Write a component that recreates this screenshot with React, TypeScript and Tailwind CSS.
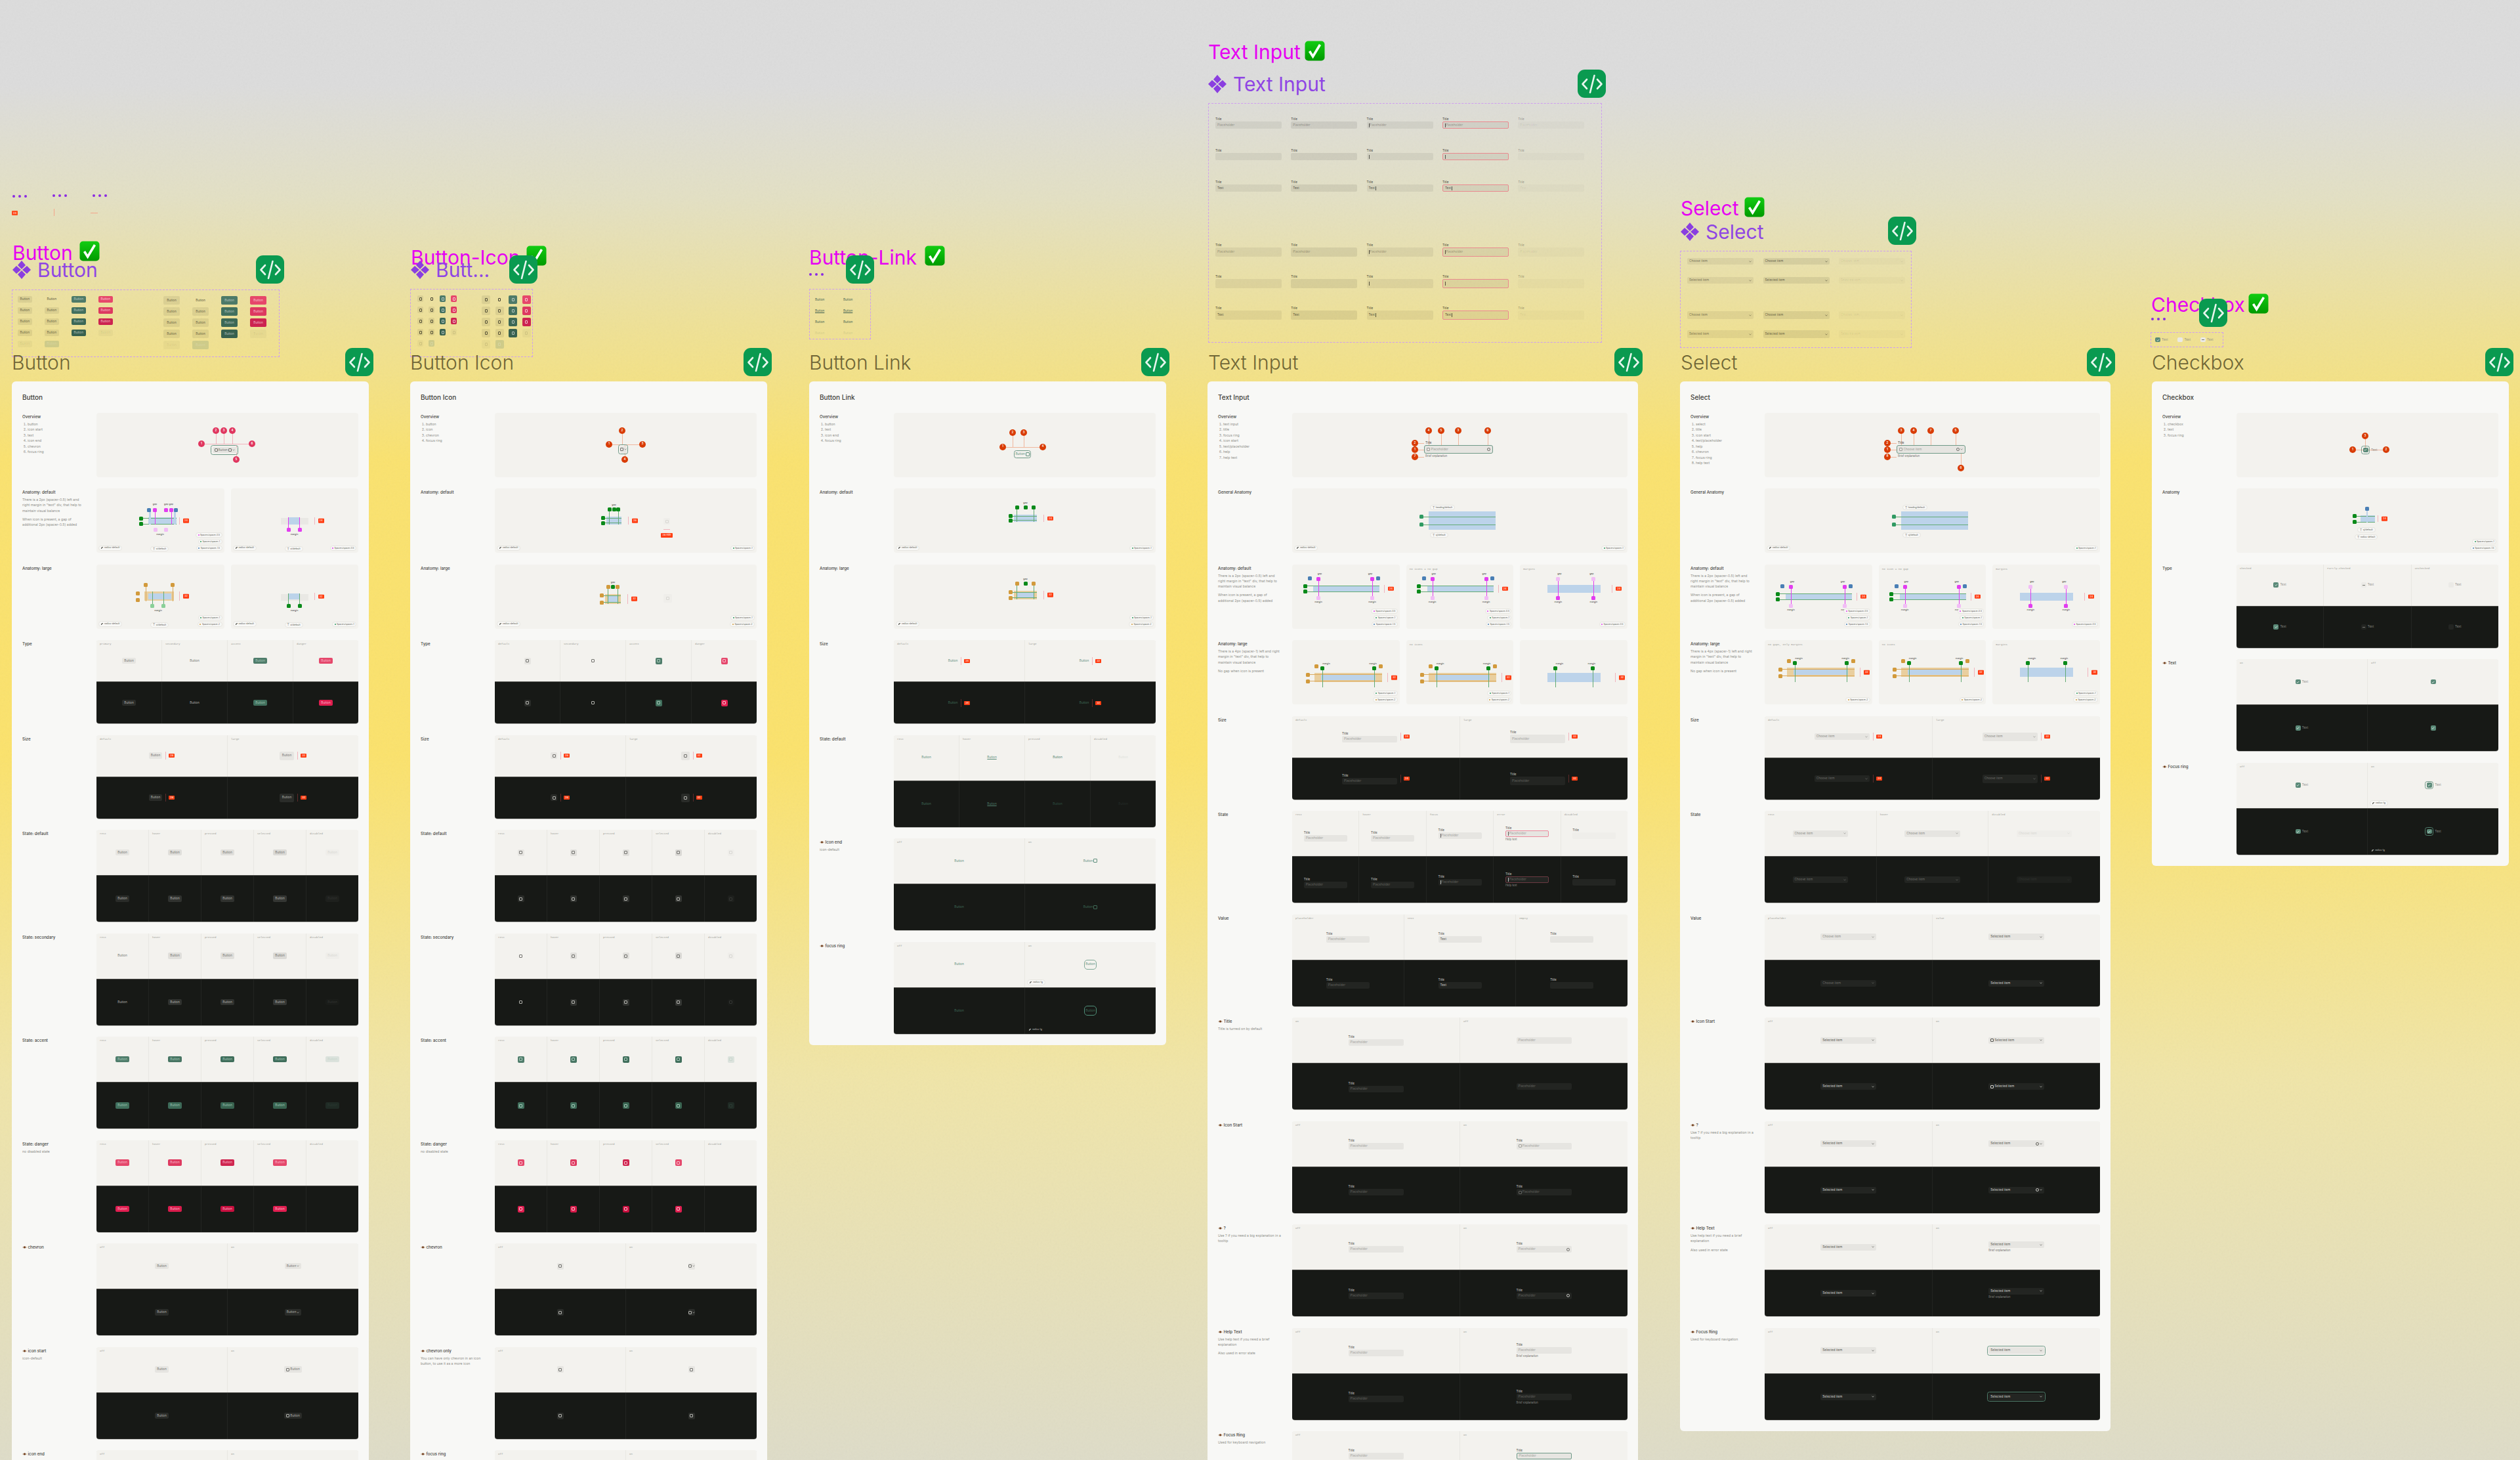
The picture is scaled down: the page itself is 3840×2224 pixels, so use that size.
import type { ReactNode } from 'react';

const SANS = 'font-["Inter","Liberation_Sans",sans-serif]';
const MONO = 'font-["Liberation_Mono",monospace]';

const TONE: Record<string, string> = {
    crimson: 'bg-[#e0365f]',
    rust: 'bg-[#d93c05]',
    blue: 'bg-[#4a7fb5]',
    magenta: 'bg-[#e23df0]',
    lilac: 'bg-[#f2bdf6]',
    green: 'bg-[#0a8a1a]',
    teal: 'bg-[#2f9a62]',
    mint: 'bg-[#8ad098]',
    amber: 'bg-[#d29a3c]',
    pink: 'bg-[#f2b4bd]',
    peach: 'bg-[#f0b79e]',
    greenline: 'bg-[#63ab74]',
    amberline: 'bg-[#dba95c]',
    blueband: 'bg-[#bcd3ea]',
    amberband: 'bg-[#e9cf9f]',
    ghost: 'bg-[#e9e8e4]',
};

/* ---------- canvas furniture ---------- */

function CodeBadge({ x, y }: { x: number; y: number }) {
    return (
        <div className="absolute z-10 flex h-[43px] w-[43px] items-center justify-center rounded-[11px] bg-[#0a9a50]" style={{ left: x, top: y }}>
            <svg width="36" height="36" viewBox="0 0 36 36" fill="none" stroke="#e8f6ee" strokeWidth="2.6" strokeLinecap="round" strokeLinejoin="round">
                <path d="M10 11 3.5 18 10 25" />
                <path d="M26 11 32.5 18 26 25" />
                <path d="M21.5 5 15 31" />
            </svg>
        </div>
    );
}

function CheckEmoji({ x, y }: { x: number; y: number }) {
    return (
        <svg className="absolute" style={{ left: x, top: y }} width="31" height="31" viewBox="0 0 31 31">
            <defs>
                <linearGradient id="emoji" x1="0" y1="0" x2="0" y2="1">
                    <stop offset="0" stopColor="#12cc12" />
                    <stop offset="1" stopColor="#009a00" />
                </linearGradient>
            </defs>
            <rect x="0.5" y="0.5" width="30" height="30" rx="5" fill="url(#emoji)" />
            <path d="M7.5 16 12.6 24 23.5 6" fill="none" stroke="#fff" strokeWidth="3.6" strokeLinejoin="miter" />
        </svg>
    );
}

function Diamonds() {
    return (
        <svg width="28" height="28" viewBox="0 0 28 28" fill="#8a3ee0" className="shrink-0">
            <path d="M14 0 20 7 14 13 8 7Z" />
            <path d="M14 15 20 21 14 28 8 21Z" />
            <path d="M0 14 6 8 13 14 6 20Z" />
            <path d="M15 14 22 8 28 14 22 20Z" />
        </svg>
    );
}

function Magenta({ x, y, children }: { x: number; y: number; children: ReactNode }) {
    return (
        <div className="absolute whitespace-nowrap text-[30px] leading-[34px] text-[#e600f2]" style={{ left: x, top: y }}>
            {children}
        </div>
    );
}

function Purple({ x, y, text }: { x: number; y: number; text: string }) {
    return (
        <div className="absolute flex items-center gap-[10px] whitespace-nowrap text-[30px] leading-[34px] text-[#8f45e4]" style={{ left: x, top: y }}>
            <Diamonds />
            {text}
        </div>
    );
}

function Dots({ x, y }: { x: number; y: number }) {
    return (
        <div className="absolute flex gap-[5px]" style={{ left: x, top: y }}>
            <span className="h-[4px] w-[4px] rounded-full bg-[#8a2be2]" />
            <span className="h-[4px] w-[4px] rounded-full bg-[#8a2be2]" />
            <span className="h-[4px] w-[4px] rounded-full bg-[#8a2be2]" />
        </div>
    );
}

function FrameName({ x, text }: { x: number; text: string }) {
    return (
        <div className="absolute top-[535px] whitespace-nowrap text-[30px] font-light leading-[34px] text-[#6f6636]" style={{ left: x }}>
            {text}
        </div>
    );
}

function Dashed({ x, y, w, h, children }: { x: number; y: number; w: number; h: number; children: ReactNode }) {
    return (
        <div className="absolute border border-dashed border-[#cf9df0]" style={{ left: x, top: y, width: w, height: h }}>
            {children}
        </div>
    );
}

/* ---------- preview sets inside the dashed frames ---------- */

const GLASS = [
    ['bg-black/[0.07] text-black/60', 'bg-transparent text-black/70', 'bg-[#4d7a68] text-white/60', 'bg-[#e6476a] text-white/70'],
    ['bg-black/[0.07] text-black/60', 'bg-black/[0.07] text-black/60', 'bg-[#42705e] text-white/60', 'bg-[#dd3960] text-white/70'],
    ['bg-black/[0.07] text-black/60', 'bg-black/[0.07] text-black/60', 'bg-[#3c6856] text-white/60', 'bg-[#cc2450] text-white/70'],
    ['bg-black/[0.07] text-black/60', 'bg-black/[0.07] text-black/60', 'bg-[#38614f] text-white/60'],
    ['bg-black/[0.03] text-black/10', 'bg-black/[0.03] text-black/10', 'bg-[#4d7a68]/20 text-white/20'],
];

function ButtonSet({ large }: { large?: boolean }) {
    return (
        <div className={large ? 'grid grid-cols-[repeat(4,25px)] gap-x-[19px] gap-y-[4px]' : 'grid grid-cols-[repeat(4,21.5px)] gap-x-[19.5px] gap-y-[7.5px]'}>
            {GLASS.flat().map((tone, i) => (
                <span key={i} className={`flex items-center justify-center rounded-[2px] text-[4.7px] ${large ? 'h-[13px]' : 'h-[9.5px]'} ${tone}`}>
                    Button
                </span>
            ))}
        </div>
    );
}

function IconSet({ large }: { large?: boolean }) {
    return (
        <div className={large ? 'grid grid-cols-[repeat(4,13px)] gap-x-[7.5px] gap-y-[4px]' : 'grid grid-cols-[repeat(4,9px)] gap-x-[8px] gap-y-[7px]'}>
            {GLASS.flat().map((tone, i) => (
                <span key={i} className={`flex items-center justify-center rounded-[2px] ${large ? 'h-[13px]' : 'h-[10px]'} ${tone}`}>
                    <span className="h-[5px] w-[4px] rounded-[1px] border-[0.5px] border-current" />
                </span>
            ))}
        </div>
    );
}

function LinkSet() {
    const rows = ['text-[#3f5f50]', 'text-[#3f5f50] underline', 'text-[#3f5f50]', 'text-[#3f5f50]/20'];
    return (
        <div className="grid grid-cols-[repeat(2,16px)] gap-x-[27px] gap-y-[10px] pl-[8px] pt-[12px]">
            {rows.flatMap((tone, i) => [
                <span key={`a${i}`} className={`text-[4.7px] leading-[7px] ${tone}`}>Button</span>,
                <span key={`b${i}`} className={`text-[4.7px] leading-[7px] ${tone}`}>Button</span>,
            ])}
        </div>
    );
}

function InputSet({ large }: { large?: boolean }) {
    const stateTone = [
        'bg-black/[0.06]',
        'bg-black/[0.08]',
        'bg-black/[0.06]',
        'bg-black/[0.06] border border-[#e98a8f]',
        'bg-black/[0.02]',
    ];
    const rows = [
        { text: 'Placeholder', tone: 'text-black/35' },
        { text: '', tone: '' },
        { text: 'Text', tone: 'text-black/70' },
    ];
    return (
        <div className="grid grid-cols-[repeat(5,101px)] gap-x-[14.3px]">
            {rows.flatMap((row, r) =>
                stateTone.map((tone, i) => (
                    <div key={`${r}-${i}`} className="h-[48px]">
                        <div className={`text-[4.7px] leading-[7px] ${i === 4 ? 'text-black/40' : 'text-black/80'}`}>Title</div>
                        <div className={`flex items-center rounded-[2px] px-[3px] text-[4.7px] ${large ? 'h-[14px]' : 'h-[11px]'} ${tone} ${i === 4 ? 'text-black/10' : row.tone}`}>
                            {i > 1 && i < 4 && r !== 2 ? <span className="mr-[0.5px] h-[6px] w-[0.5px] bg-black/60" /> : null}
                            {row.text}
                            {i > 1 && i < 4 && r === 2 ? <span className="ml-[0.5px] h-[6px] w-[0.5px] bg-black/60" /> : null}
                        </div>
                    </div>
                )),
            )}
        </div>
    );
}

function SelectSet({ large }: { large?: boolean }) {
    const labels = ['Choose item', 'Selected item'];
    return (
        <div className={`grid grid-cols-[repeat(3,101px)] gap-x-[14.5px] ${large ? 'gap-y-[17px]' : 'gap-y-[19px]'}`}>
            {labels.flatMap(label =>
                [0, 1, 2].map(i => (
                    <div key={label + i} className={`flex items-center justify-between rounded-[2px] px-[3px] text-[4.7px] ${large ? 'h-[12px]' : 'h-[10px]'} ${i === 2 ? 'bg-black/[0.02] text-black/10' : i === 1 ? 'bg-black/[0.08] text-black/60' : 'bg-black/[0.06] text-black/50'}`}>
                        {label}
                        <svg width="4" height="3" viewBox="0 0 4 3" fill="none" stroke="currentColor" strokeWidth="0.6">
                            <path d="M0.5 0.5 2 2.2 3.5 0.5" />
                        </svg>
                    </div>
                )),
            )}
        </div>
    );
}

/* ---------- widgets used in the spec tables ---------- */

type Tone = { light: string; dark: string };

const BTN: Record<string, Tone> = {
    primary: { light: 'bg-[#e6e5e1] text-[#72726e]', dark: 'bg-[#2a2c29] text-[#b3b3ae]' },
    hover: { light: 'bg-[#e0dfdb] text-[#72726e]', dark: 'bg-[#30322f] text-[#b3b3ae]' },
    pressed: { light: 'bg-[#dbdad6] text-[#72726e]', dark: 'bg-[#343633] text-[#b3b3ae]' },
    disabled: { light: 'bg-[#efeeea] text-[#d8d7d3]', dark: 'bg-[#1e201d] text-[#343633]' },
    secondary: { light: 'bg-transparent text-[#72726e]', dark: 'bg-transparent text-[#b3b3ae]' },
    secDisabled: { light: 'bg-[#efeeea] text-[#d8d7d3]', dark: 'bg-[#1a1c19] text-[#343633]' },
    accent: { light: 'bg-[#4f7d6b] text-[#a9cbbb]', dark: 'bg-[#41705d] text-[#9fc4b3]' },
    accentHover: { light: 'bg-[#477563] text-[#a9cbbb]', dark: 'bg-[#3d6a58] text-[#9fc4b3]' },
    accentPress: { light: 'bg-[#3f6e5b] text-[#a9cbbb]', dark: 'bg-[#386350] text-[#9fc4b3]' },
    accentOff: { light: 'bg-[#dbe2dc] text-[#c8d6cd]', dark: 'bg-[#202b25] text-[#2c3a33]' },
    danger: { light: 'bg-[#e5486c] text-[#f9bccb]', dark: 'bg-[#e01e50] text-[#f9bccb]' },
    dangerHover: { light: 'bg-[#de3a60] text-[#f9bccb]', dark: 'bg-[#d81b4b] text-[#f9bccb]' },
    dangerPress: { light: 'bg-[#cf2650] text-[#f9bccb]', dark: 'bg-[#c80f3f] text-[#f9bccb]' },
    empty: { light: 'hidden', dark: 'hidden' },
};

function Glyph() {
    return <span className="h-[5px] w-[5px] shrink-0 rounded-[1px] border-[0.5px] border-current" />;
}

function Chevron() {
    return (
        <svg width="4" height="3" viewBox="0 0 4 3" fill="none" stroke="currentColor" strokeWidth="0.6" className="shrink-0">
            <path d="M0.5 0.5 2 2.2 3.5 0.5" />
        </svg>
    );
}

function Btn({ tone = 'primary', dark, large, start, end, chevron }: { tone?: string; dark?: boolean; large?: boolean; start?: boolean; end?: boolean; chevron?: boolean }) {
    const t = BTN[tone];
    return (
        <span className={`flex items-center justify-center gap-[1px] rounded-[2px] text-[4.7px] ${large ? 'h-[13px] px-[4px]' : 'h-[9.5px] px-[3px]'} ${dark ? t.dark : t.light}`}>
            {start && <Glyph />}
            Button
            {end && <Glyph />}
            {chevron && <Chevron />}
        </span>
    );
}

function IconBtn({ tone = 'primary', dark, large, chevron }: { tone?: string; dark?: boolean; large?: boolean; chevron?: boolean }) {
    const t = BTN[tone];
    return (
        <span className={`flex items-center justify-center gap-[1px] rounded-[2px] ${large ? 'h-[13px] min-w-[13px]' : 'h-[10px] min-w-[10px]'} ${dark ? t.dark : t.light}`}>
            <Glyph />
            {chevron && <Chevron />}
        </span>
    );
}

function Measure({ n, dark }: { n: number; dark?: boolean }) {
    return (
        <span className="ml-[5px] flex items-center gap-[4px]">
            <span className={`h-[12px] w-[1px] ${dark ? 'bg-[#5c2a2a]' : 'bg-[#f2b4bd]'}`} />
            <span className="flex h-[6px] w-[9px] items-center justify-center rounded-[1px] bg-[#ff3d12] text-[4px] text-white">{n}</span>
        </span>
    );
}

function Ring({ children, dark }: { children: ReactNode; dark?: boolean }) {
    return <span className={`inline-flex rounded-[3.5px] border-[0.8px] p-[1.5px] ${dark ? 'border-[#4f7d6b]' : 'border-[#6f9a88]'}`}>{children}</span>;
}

function RadiusPill({ text, dark }: { text: string; dark?: boolean }) {
    return (
        <span className={`absolute bottom-[3px] left-[3px] flex items-center gap-[2px] rounded-full px-[3px] py-[0.5px] text-[3.5px] ${dark ? 'text-[#c6c6c1]' : 'border-[0.5px] border-[#e6e5e0] bg-[#f8f8f6] text-[#55554f]'}`}>
            <span className="h-[3px] w-[3px] rounded-tl-[3px] border-l-[0.5px] border-t-[0.5px] border-current" />
            {text}
        </span>
    );
}

function Field({ w = 'w-[84px]', dark, large, title = true, value, ph = 'Placeholder', start, help, helpText, tone, caret, shift }: { w?: string; dark?: boolean; large?: boolean; title?: boolean; value?: string; ph?: string; start?: boolean; help?: boolean; helpText?: string; tone?: string; caret?: boolean; shift?: boolean }) {
    const fill = dark ? 'bg-[#232522]' : 'bg-[#e6e5e1]';
    const ink = value ? (dark ? 'text-[#d4d4cf]' : 'text-[#4c4c48]') : dark ? 'text-[#62625e]' : 'text-[#a3a39e]';
    return (
        <div className={`flex flex-col gap-[1px] ${w} ${shift ? 'mt-[8px]' : ''}`}>
            {title && <span className={`text-[4.7px] leading-[6px] ${dark ? 'text-[#cfcfca]' : 'text-[#454541]'}`}>Title</span>}
            <div className={`flex items-center gap-[1px] rounded-[2px] px-[3px] text-[4.7px] ${large ? 'h-[12.5px]' : 'h-[10px]'} ${fill} ${ink} ${tone ?? ''}`}>
                {start && <Glyph />}
                {caret && <span className={`h-[6px] w-[0.5px] ${dark ? 'bg-white/70' : 'bg-black/60'}`} />}
                {value ?? ph}
                {help && <span className={`ml-auto h-[5px] w-[5px] rounded-full border-[0.6px] ${dark ? 'border-[#cfcfca] text-[#cfcfca]' : 'border-[#6a6a66]'}`} />}
            </div>
            {helpText && <span className={`text-[4.2px] leading-[6px] ${dark ? 'text-[#8d8d88]' : 'text-[#6a6a66]'}`}>{helpText}</span>}
        </div>
    );
}

function Sel({ dark, large, text = 'Choose item', faint, start, help, helpText, w = 'w-[84.5px]' }: { dark?: boolean; large?: boolean; text?: string; faint?: boolean; start?: boolean; help?: boolean; helpText?: string; w?: string }) {
    const isValue = text.startsWith('Selected');
    const tone = faint
        ? dark ? 'bg-[#1e201d] text-[#323431]' : 'bg-[#efeeea] text-[#d8d7d3]'
        : dark
            ? `bg-[#232522] ${isValue ? 'text-[#d4d4cf]' : 'text-[#6c6c68]'}`
            : `bg-[#e6e5e1] ${isValue ? 'text-[#55554f]' : 'text-[#8c8c87]'}`;
    return (
        <div className={`flex flex-col gap-[1px] ${w}`}>
            <div className={`flex items-center gap-[1px] rounded-[2px] px-[3px] text-[4.7px] ${large ? 'h-[13px]' : 'h-[10px]'} ${tone}`}>
                {start && <Glyph />}
                {text}
                <span className="ml-auto flex items-center gap-[1px]">
                    {help && <span className="h-[5px] w-[5px] rounded-full border-[0.6px] border-current" />}
                    <Chevron />
                </span>
            </div>
            {helpText && <span className={`text-[4.2px] leading-[6px] ${dark ? 'text-[#8d8d88]' : 'text-[#6a6a66]'}`}>{helpText}</span>}
        </div>
    );
}

function CheckRow({ kind = 'on', dark, text = true, ring }: { kind?: 'on' | 'part' | 'off'; dark?: boolean; text?: boolean; ring?: boolean }) {
    const box = (
        <span className={`flex h-[7.5px] w-[8px] items-center justify-center rounded-[2px] ${kind === 'on' ? 'bg-[#5a8a78]' : dark ? 'bg-[#232522]' : 'bg-[#ebeae6]'}`}>
            {kind === 'on' && (
                <svg width="5" height="4" viewBox="0 0 5 4" fill="none" stroke="#fff" strokeWidth="0.7">
                    <path d="M0.6 2 2 3.3 4.4 0.7" />
                </svg>
            )}
            {kind === 'part' && <span className="h-[0.7px] w-[4px] bg-[#77776f]" />}
        </span>
    );
    return (
        <span className={`flex items-center gap-[2px] text-[4.7px] ${dark ? 'text-[#8d8d88]' : 'text-[#8c8c87]'}`}>
            {ring ? <Ring dark={dark}>{box}</Ring> : box}
            {text && 'Text'}
        </span>
    );
}

/* ---------- spec sheet layout ---------- */

type Cell = (dark: boolean) => ReactNode;

function Eye() {
    return (
        <svg width="7" height="4" viewBox="0 0 7 4" className="mr-[1.5px] inline-block align-baseline">
            <path d="M0 2C1.5 0 5.5 0 7 2 5.5 4 1.5 4 0 2Z" fill="#c9b8a4" />
            <circle cx="3.5" cy="2" r="1.4" fill="#6b3413" />
        </svg>
    );
}

function Row({ h, title, eye, list, note, children }: { h: string; title: string; eye?: boolean; list?: string[]; note?: string[]; children: ReactNode }) {
    return (
        <div className={`flex ${h}`}>
            <div className="w-[113px] shrink-0 pr-[16px] pt-[2px]">
                <div className="text-[6.2px] font-medium leading-[8px] text-[#3f3f3b]">
                    {eye && <Eye />}
                    {title}
                </div>
                {list && (
                    <ol className="mt-[2.5px] list-decimal pl-[8px] text-[5.2px] leading-[8.5px] text-[#8f8f8a]">
                        {list.map(item => (
                            <li key={item}>{item}</li>
                        ))}
                    </ol>
                )}
                {note?.map(line => (
                    <p key={line} className="mt-[3px] mb-[5px] text-[5.2px] leading-[8.3px] text-[#8f8f8a]">
                        {line}
                    </p>
                ))}
            </div>
            <div className="flex min-w-0 flex-1 gap-[10px]">{children}</div>
        </div>
    );
}

function Panel({ label, children }: { label?: string; children?: ReactNode }) {
    return (
        <div className={`relative min-w-0 flex-1 overflow-hidden rounded-[4px] bg-[#f3f2ee] ${SANS}`}>
            {label && <span className={`absolute left-[5px] top-[4px] text-[4.2px] text-[#9c9c97] ${MONO}`}>{label}</span>}
            {children}
        </div>
    );
}

function Table({ labels, cells, tall = true }: { labels: string[]; cells: Cell[]; tall?: boolean }) {
    return (
        <div className="flex min-w-0 flex-1 flex-col overflow-hidden rounded-[4px] shadow-[0_0.5px_0_#8a8a86]">
            <div className={`flex border-b border-[#4a4a46] ${tall ? 'h-[70px]' : 'h-[64px]'}`}>
                {cells.map((cell, i) => (
                    <div key={i} className="relative flex min-w-0 flex-1 items-center justify-center border-r border-[#e8e7e2] bg-[#f3f2ee] last:border-r-0">
                        <span className={`absolute left-[5px] top-[3px] text-[4.2px] text-[#9c9c97] ${MONO}`}>{labels[i]}</span>
                        {cell(false)}
                    </div>
                ))}
            </div>
            <div className="flex flex-1">
                {cells.map((cell, i) => (
                    <div key={i} className="relative flex min-w-0 flex-1 items-center justify-center border-r border-[#232522] bg-[#171916] last:border-r-0">
                        {cell(true)}
                    </div>
                ))}
            </div>
        </div>
    );
}

function Card({ title, width, children }: { title: string; width: string; children: ReactNode }) {
    return (
        <div className={`rounded-[6px] bg-[#f8f8f6] px-[16px] pb-[17px] ${width} ${SANS}`}>
            <div className="h-[48px] pt-[17px] text-[10px] font-medium leading-[14px] text-[#3f3f3b]">{title}</div>
            <div className="flex flex-col gap-[17.5px]">{children}</div>
        </div>
    );
}

/* ---------- diagram pieces: these sit on a free canvas inside a panel ---------- */

function Pin({ x, y, n, c = 'crimson' }: { x: number; y: number; n: number; c?: string }) {
    return (
        <span className={`absolute flex h-[10px] w-[10px] -translate-x-1/2 -translate-y-1/2 items-center justify-center rounded-full text-[4.5px] font-semibold text-white ${TONE[c]}`} style={{ left: x, top: y }}>
            {n}
        </span>
    );
}

function Bar({ x, y, w, h, c }: { x: number; y: number; w: number; h: number; c: string }) {
    return <span className={`absolute ${TONE[c]}`} style={{ left: x, top: y, width: w, height: h }} />;
}

function Chip({ x, y, n, c }: { x: number; y: number; n: string; c: string }) {
    return (
        <span className={`absolute flex h-[6px] w-[6px] -translate-x-1/2 -translate-y-1/2 items-center justify-center rounded-[1.5px] text-[3.5px] text-white ${TONE[c]}`} style={{ left: x, top: y }}>
            {n}
        </span>
    );
}

function Note({ x, y, text }: { x: number; y: number; text: string }) {
    return (
        <span className="absolute -translate-x-1/2 -translate-y-1/2 whitespace-nowrap text-[3.6px] text-[#3f3f3b]" style={{ left: x, top: y }}>
            {text}
        </span>
    );
}

function Size({ x, y, h, n }: { x: number; y: number; h: number; n: number }) {
    return (
        <>
            <Bar x={x} y={y - h / 2} w={1} h={h} c="pink" />
            <span className="absolute flex h-[6.5px] w-[9px] -translate-y-1/2 items-center justify-center rounded-[1px] bg-[#ff3d12] text-[4px] text-white" style={{ left: x + 6, top: y }}>
                {n}
            </span>
        </>
    );
}

function Tokens({ items }: { items: [string, string][] }) {
    return (
        <div className="absolute bottom-[3px] right-[3px] flex flex-col items-end gap-[2px]">
            {items.map(([text, c]) => (
                <span key={text} className="flex items-center gap-[1.5px] rounded-full border-[0.5px] border-[#e6e5e0] bg-[#f8f8f6] px-[2.5px] text-[3.2px] leading-[6px] text-[#55554f]">
                    <span className={`h-[2px] w-[2px] rounded-full ${TONE[c]}`} />
                    {text}
                </span>
            ))}
        </div>
    );
}

function StylePill({ x, y, text }: { x: number; y: number; text: string }) {
    return (
        <span className="absolute flex items-center gap-[1.5px] rounded-full border-[0.5px] border-[#e6e5e0] bg-[#f8f8f6] px-[3px] text-[3.4px] leading-[6px] text-[#55554f]" style={{ left: x, top: y }}>
            <b className="text-[5px] font-normal leading-[5px] text-[#8c8c87]">T</b>
            {text}
        </span>
    );
}

const SP05: [string, string] = ['Spacers/spacer-0.5', 'magenta'];
const SP1: [string, string] = ['Spacers/spacer-1', 'teal'];
const SP15: [string, string] = ['Spacers/spacer-1.5', 'blue'];
const SP2: [string, string] = ['Spacers/spacer-2', 'amber'];

function ButtonOverview() {
    return (
        <Panel>
            <Bar x={165} y={47} w={72} h={0.7} c="pink" />
            <Bar x={182} y={27} w={0.7} h={20} c="pink" />
            <Bar x={194} y={27} w={0.7} h={20} c="pink" />
            <Bar x={207} y={27} w={0.7} h={20} c="pink" />
            <Bar x={213} y={50} w={0.7} h={21} c="pink" />
            <div className="absolute left-[174px] top-[41px]">
                <Ring><Btn start end chevron /></Ring>
            </div>
            <Pin x={160} y={47} n={1} />
            <Pin x={237} y={47} n={6} />
            <Pin x={182} y={27} n={2} />
            <Pin x={194} y={27} n={3} />
            <Pin x={207} y={27} n={4} />
            <Pin x={213} y={71} n={5} />
        </Panel>
    );
}

function ButtonAnatomy({ large, text }: { large?: boolean; text?: boolean }) {
    if (text) {
        return (
            <Panel>
                <Bar x={76} y={45} w={42} h={10} c="ghost" />
                <Bar x={87} y={44} w={18} h={large ? 9 : 11} c="blueband" />
                <Bar x={87} y={44} w={1} h={19} c={large ? 'greenline' : 'magenta'} />
                <Bar x={104} y={44} w={1} h={19} c={large ? 'greenline' : 'magenta'} />
                <Chip x={88} y={63} n="" c={large ? 'green' : 'magenta'} />
                <Chip x={105} y={63} n="" c={large ? 'green' : 'magenta'} />
                <Note x={97} y={71} text="margin" />
                <Size x={127} y={49} h={11} n={large ? 32 : 24} />
                <RadiusPill text="radius-default" />
                <StylePill x={82} y={88} text="st/default" />
                <Tokens items={[large ? SP1 : SP05]} />
            </Panel>
        );
    }
    if (large) {
        return (
            <Panel>
                <Bar x={73} y={41.5} w={45} h={14} c="amberband" />
                <Bar x={79} y={44} w={35} h={9} c="blueband" />
                <Bar x={75} y={31} w={0.7} h={25} c="amberline" />
                <Bar x={116} y={31} w={0.7} h={25} c="amberline" />
                <Bar x={85} y={41} w={0.7} h={22} c="greenline" />
                <Bar x={102} y={41} w={0.7} h={22} c="greenline" />
                <Chip x={75} y={31} n="" c="amber" />
                <Chip x={116} y={31} n="" c="amber" />
                <Chip x={63} y={44} n="" c="amber" />
                <Chip x={63} y={54} n="" c="amber" />
                <Chip x={85} y={63} n="" c="mint" />
                <Chip x={102} y={63} n="" c="mint" />
                <Note x={94} y={71} text="margin" />
                <Size x={126} y={48.6} h={14} n={32} />
                <RadiusPill text="radius-default" />
                <StylePill x={82} y={88} text="st/default" />
                <Tokens items={[SP1, SP2]} />
            </Panel>
        );
    }
    return (
        <Panel>
            <Bar x={79} y={44} w={43} h={11} c="blueband" />
            <Bar x={68} y={45} w={54} h={1} c="greenline" />
            <Bar x={68} y={54} w={54} h={1} c="greenline" />
            <Bar x={80} y={33} w={3} h={22} c="blueband" />
            <Bar x={118} y={33} w={3} h={22} c="blueband" />
            <Bar x={89} y={33} w={1} h={22} c="magenta" />
            <Bar x={114} y={33} w={1} h={22} c="magenta" />
            <Chip x={68} y={45.5} n="" c="green" />
            <Chip x={68} y={54} n="" c="green" />
            <Chip x={80} y={33} n="" c="blue" />
            <Chip x={121} y={33} n="" c="blue" />
            <Chip x={89} y={33} n="" c="magenta" />
            <Chip x={106} y={33} n="" c="magenta" />
            <Chip x={114} y={33} n="" c="magenta" />
            <Chip x={89.5} y={63} n="" c="lilac" />
            <Chip x={105.5} y={63} n="" c="lilac" />
            <Note x={89} y={24.5} text="gap" />
            <Note x={110} y={24.5} text="gap gap" />
            <Note x={97} y={71} text="margin" />
            <Size x={126} y={49} h={11} n={24} />
            <RadiusPill text="radius-default" />
            <StylePill x={82} y={88} text="st/default" />
            <Tokens items={[SP05, SP1, SP15]} />
        </Panel>
    );
}

function CrossOverview({ x, y, w, h, pins, children, c = 'rust' }: { x: number; y: number; w: number; h: number; pins: [number, number][]; children: ReactNode; c?: string }) {
    const cx = x + w / 2;
    const cy = y + h / 2;
    return (
        <Panel>
            {pins.map(([px, py], i) =>
                py === cy ? (
                    <Bar key={i} x={Math.min(px, cx)} y={py} w={Math.abs(px - cx)} h={0.7} c="peach" />
                ) : (
                    <Bar key={i} x={px} y={Math.min(py, cy)} w={0.7} h={Math.abs(py - cy)} c="peach" />
                ),
            )}
            <div className="absolute" style={{ left: x, top: y }}>{children}</div>
            {pins.map(([px, py], i) => (
                <Pin key={i} x={px} y={py} n={i + 1} c={c} />
            ))}
        </Panel>
    );
}

function GridAnatomy({ x, y, w, h, large, n, children, pillX }: { x: number; y: number; w: number; h: number; large?: boolean; n: number; children?: ReactNode; pillX?: boolean }) {
    return (
        <Panel>
            <Bar x={x} y={y} w={w} h={h} c={large ? 'amberband' : 'blueband'} />
            <Bar x={x + 4} y={y + 3} w={w - 8} h={h - 6} c="blueband" />
            <Bar x={x - 5} y={y + 2} w={w + 5} h={1} c="greenline" />
            <Bar x={x - 5} y={y + h - 3} w={w + 5} h={1} c="greenline" />
            <Bar x={x + 4} y={y - 11} w={1} h={h + 11} c="greenline" />
            <Bar x={x + w - 5} y={y - 11} w={1} h={h + 11} c="greenline" />
            <Chip x={x - 5} y={y + 2} n="" c={large ? 'amber' : 'green'} />
            <Chip x={x - 5} y={y + h - 2} n="" c={large ? 'amber' : 'green'} />
            <Chip x={x + 5} y={y - 11} n="" c={large ? 'amber' : 'green'} />
            <Chip x={x + w / 2} y={y - 11} n="" c="green" />
            <Chip x={x + w - 5} y={y - 11} n="" c={large ? 'amber' : 'green'} />
            <Note x={x + w / 2} y={y - 17} text="gap" />
            <Size x={x + w + 10} y={y + h / 2} h={h} n={n} />
            {children}
            <RadiusPill text="radius-default" />
            <Tokens items={pillX ? [SP1, SP2] : [SP1]} />
        </Panel>
    );
}

function FieldOverview({ select }: { select?: boolean }) {
    const tops = select ? [208, 227, 253, 291] : [208, 227, 253, 298];
    return (
        <Panel>
            <Bar x={187} y={46} w={14} h={0.7} c="peach" />
            <Bar x={187} y={56} w={14} h={0.7} c="peach" />
            <Bar x={187} y={66.5} w={14} h={0.7} c="peach" />
            {tops.map(x => (
                <Bar key={x} x={x} y={27} w={0.7} h={24} c="peach" />
            ))}
            {select && <Bar x={299} y={56} w={0.7} h={28} c="peach" />}
            <span className="absolute left-[203px] top-[42px] text-[4.7px] leading-[6px] text-[#454541]">Title</span>
            <div className={`absolute left-[201px] top-[49px] flex h-[13px] w-[105px] items-center gap-[1.5px] rounded-[3px] border-[0.8px] border-[#6f9a88] bg-[#e6e5e1] px-[3px] text-[4.7px] text-[#9c9c97]`}>
                <Glyph />
                {select ? 'Choose item' : 'Placeholder'}
                <span className="ml-auto flex items-center gap-[1.5px] text-[#6a6a66]">
                    <span className="h-[5px] w-[5px] rounded-full border-[0.6px] border-current" />
                    {select && <Chevron />}
                </span>
            </div>
            <span className="absolute left-[203px] top-[63px] text-[4.2px] leading-[6px] text-[#6a6a66]">Brief explanation</span>
            <Pin x={187} y={46} n={2} c="rust" />
            <Pin x={187} y={56} n={1} c="rust" />
            <Pin x={187} y={66.5} n={select ? 8 : 7} c="rust" />
            <Pin x={208} y={27} n={select ? 3 : 4} c="rust" />
            <Pin x={227} y={27} n={select ? 4 : 5} c="rust" />
            <Pin x={253} y={27} n={select ? 7 : 3} c="rust" />
            <Pin x={select ? 291 : 298} y={27} n={select ? 5 : 6} c="rust" />
            {select && <Pin x={299} y={84} n={6} c="rust" />}
        </Panel>
    );
}

function GeneralAnatomy() {
    return (
        <Panel>
            <Bar x={208} y={35} w={102} h={28} c="blueband" />
            <Bar x={197} y={42.5} w={113} h={1} c="greenline" />
            <Bar x={197} y={54.5} w={113} h={1} c="greenline" />
            <Chip x={197} y={43} n="" c="teal" />
            <Chip x={197} y={55} n="" c="teal" />
            <StylePill x={210} y={25} text="heading/default" />
            <StylePill x={210} y={67} text="sj/default" />
            <RadiusPill text="radius-default" />
            <Tokens items={[SP1]} />
        </Panel>
    );
}

function FieldAnatomy({ kind, large, y0, label, tokens, n }: { kind: 'icons' | 'plain' | 'margins'; large?: boolean; y0: number; label?: string; tokens: [string, string][]; n: number }) {
    const h = large ? 14 : 12;
    const x0 = kind === 'margins' ? 42 : large ? 34 : 24;
    const x1 = kind === 'margins' ? 123 : large ? 137 : 133;
    const w = x1 - x0;
    const mid = y0 + h / 2;
    const inner = large ? 'green' : 'magenta';
    return (
        <Panel label={label}>
            {kind === 'margins' ? (
                <Bar x={x0} y={y0} w={w} h={h} c="blueband" />
            ) : large ? (
                <>
                    <Bar x={x0} y={y0} w={w} h={h} c="amberband" />
                    <Bar x={x0 + 10} y={y0 + 3} w={w - 20} h={h - 6} c="blueband" />
                    <Bar x={x0 - 10} y={y0 + 2} w={w + 10} h={0.7} c="amberline" />
                    <Bar x={x0 - 10} y={y0 + h - 2} w={w + 10} h={0.7} c="amberline" />
                </>
            ) : (
                <>
                    <Bar x={x0 + 8} y={y0 + 1} w={w - 8} h={h - 2} c="blueband" />
                    <Bar x={x0 - 4} y={y0 + 1} w={w + 4} h={1.2} c="greenline" />
                    <Bar x={x0 - 4} y={y0 + h - 2} w={w + 4} h={1.2} c="greenline" />
                </>
            )}
            <Bar x={x0 + (large ? 12 : 16)} y={y0 - 8} w={1} h={h + 16} c={large ? 'greenline' : 'magenta'} />
            <Bar x={x1 - (large ? 12 : 11)} y={y0 - 8} w={1} h={h + 16} c={large ? 'greenline' : 'magenta'} />
            {kind !== 'margins' && (
                <>
                    <Chip x={x0 - (large ? 10 : 4.5)} y={y0 + 2.5} n="" c={large ? 'amber' : 'green'} />
                    <Chip x={x0 - (large ? 10 : 4.5)} y={y0 + h - 1.5} n="" c={large ? 'amber' : 'green'} />
                    <Chip x={x0 + 3} y={y0 - 10} n="" c={large ? 'amber' : 'blue'} />
                    <Chip x={x1 - 2} y={y0 - 10} n="" c={large ? 'amber' : 'blue'} />
                </>
            )}
            <Chip x={x0 + (large ? 12 : 16)} y={large ? y0 - 7 : y0 - 9} n="" c={kind === 'margins' && !large ? 'lilac' : inner} />
            <Chip x={x1 - (large ? 12 : 11)} y={large ? y0 - 7 : y0 - 9} n="" c={kind === 'margins' && !large ? 'lilac' : inner} />
            {!large && <Chip x={x0 + 16} y={y0 + h + 8} n="" c={kind === 'margins' ? 'magenta' : 'lilac'} />}
            {!large && <Chip x={x1 - 11} y={y0 + h + 8} n="" c={kind === 'margins' ? 'magenta' : 'lilac'} />}
            <Note x={x0 + 18} y={y0 - (large ? 13 : 16)} text={large ? 'margin' : 'gap'} />
            <Note x={x1 - 14} y={y0 - (large ? 13 : 16)} text={large ? 'margin' : 'gap'} />
            {!large && <Note x={x0 + 16} y={y0 + h + 15} text="margin" />}
            {!large && <Note x={x1 - 11} y={y0 + h + 15} text="margin" />}
            <Size x={large ? 145 : 140} y={mid} h={h} n={n} />
            <Tokens items={tokens} />
        </Panel>
    );
}

/* ---------- the six spec sheets ---------- */

const STATES5 = ['rest', 'hover', 'pressed', 'selected', 'disabled'];

function btnCells(tones: string[], wrap?: 'icon'): Cell[] {
    return tones.map(tone => (dark: boolean) =>
        tone === 'empty' ? null : wrap === 'icon' ? <IconBtn tone={tone} dark={dark} /> : <Btn tone={tone} dark={dark} />,
    );
}

const SET_DEFAULT = ['primary', 'hover', 'hover', 'pressed', 'disabled'];
const SET_SECONDARY = ['secondary', 'hover', 'hover', 'pressed', 'secDisabled'];
const SET_ACCENT = ['accent', 'accentHover', 'accentPress', 'accentPress', 'accentOff'];
const SET_DANGER = ['danger', 'dangerHover', 'dangerPress', 'danger', 'empty'];

function ButtonCard() {
    return (
        <Card title="Button" width="w-[544px]">
            <Row h="h-[97.5px]" title="Overview" list={['button', 'icon start', 'text', 'icon end', 'chevron', 'focus ring']}>
                <ButtonOverview />
            </Row>
            <Row h="h-[98px]" title="Anatomy: default" note={['There is a 2px (spacer-0.5) left and right margin in "text" div, that help to maintain visual balance', 'When icon is present, a gap of additional 2px (spacer-0.5) added']}>
                <ButtonAnatomy />
                <ButtonAnatomy text />
            </Row>
            <Row h="h-[98px]" title="Anatomy: large">
                <ButtonAnatomy large />
                <ButtonAnatomy large text />
            </Row>
            <Row h="h-[127px]" title="Type">
                <Table tall={false} labels={['primary', 'secondary', 'accent', 'danger']} cells={btnCells(['primary', 'secondary', 'accent', 'danger'])} />
            </Row>
            <Row h="h-[127px]" title="Size">
                <Table
                    tall={false}
                    labels={['default', 'large']}
                    cells={[
                        dark => <><Btn dark={dark} /><Measure n={28} dark={dark} /></>,
                        dark => <><Btn dark={dark} large /><Measure n={32} dark={dark} /></>,
                    ]}
                />
            </Row>
            <Row h="h-[140px]" title="State: default"><Table labels={STATES5} cells={btnCells(SET_DEFAULT)} /></Row>
            <Row h="h-[140px]" title="State: secondary"><Table labels={STATES5} cells={btnCells(SET_SECONDARY)} /></Row>
            <Row h="h-[140px]" title="State: accent"><Table labels={STATES5} cells={btnCells(SET_ACCENT)} /></Row>
            <Row h="h-[140px]" title="State: danger" note={['no disabled state']}><Table labels={STATES5} cells={btnCells(SET_DANGER)} /></Row>
            <Row h="h-[140px]" eye title="chevron">
                <Table labels={['off', 'on']} cells={[dark => <Btn dark={dark} />, dark => <Btn dark={dark} chevron />]} />
            </Row>
            <Row h="h-[140px]" eye title="icon start" note={['icon-default']}>
                <Table labels={['off', 'on']} cells={[dark => <Btn dark={dark} />, dark => <Btn dark={dark} start />]} />
            </Row>
            <Row h="h-[140px]" eye title="icon end" note={['icon-default']}>
                <Table labels={['off', 'on']} cells={[dark => <Btn dark={dark} />, dark => <Btn dark={dark} end />]} />
            </Row>
        </Card>
    );
}

function ButtonIconCard() {
    return (
        <Card title="Button Icon" width="w-[544px]">
            <Row h="h-[97.5px]" title="Overview" list={['button', 'icon', 'chevron', 'focus ring']}>
                <CrossOverview x={188} y={40} w={20} h={15} pins={[[174, 47.5], [194, 27], [225, 47.5], [198, 71]]}>
                    <Ring><IconBtn chevron /></Ring>
                </CrossOverview>
            </Row>
            <Row h="h-[98px]" title="Anatomy: default">
                <GridAnatomy x={170} y={43} w={23} h={12} n={28}>
                    <span className="absolute left-[257px] top-[45px]"><IconBtn tone="disabled" /></span>
                    <Bar x={257} y={62} w={10} h={0.7} c="pink" />
                    <span className="absolute left-[253px] top-[68px] flex h-[6.5px] w-[18px] items-center justify-center rounded-[1px] bg-[#ff3d12] text-[4px] text-white">28 min</span>
                </GridAnatomy>
            </Row>
            <Row h="h-[98px]" title="Anatomy: large">
                <GridAnatomy x={168} y={45} w={24} h={15} large pillX n={32}>
                    <span className="absolute left-[257px] top-[45px]"><IconBtn tone="disabled" large /></span>
                </GridAnatomy>
            </Row>
            <Row h="h-[127px]" title="Type">
                <Table tall={false} labels={['default', 'secondary', 'accent', 'danger']} cells={btnCells(['primary', 'secondary', 'accent', 'danger'], 'icon')} />
            </Row>
            <Row h="h-[127px]" title="Size">
                <Table
                    tall={false}
                    labels={['default', 'large']}
                    cells={[
                        dark => <><IconBtn dark={dark} /><Measure n={28} dark={dark} /></>,
                        dark => <><IconBtn dark={dark} large /><Measure n={32} dark={dark} /></>,
                    ]}
                />
            </Row>
            <Row h="h-[140px]" title="State: default"><Table labels={STATES5} cells={btnCells(SET_DEFAULT, 'icon')} /></Row>
            <Row h="h-[140px]" title="State: secondary"><Table labels={STATES5} cells={btnCells(SET_SECONDARY, 'icon')} /></Row>
            <Row h="h-[140px]" title="State: accent"><Table labels={STATES5} cells={btnCells(SET_ACCENT, 'icon')} /></Row>
            <Row h="h-[140px]" title="State: danger" note={['no disabled state']}><Table labels={STATES5} cells={btnCells(SET_DANGER, 'icon')} /></Row>
            <Row h="h-[140px]" eye title="chevron">
                <Table labels={['off', 'on']} cells={[dark => <IconBtn dark={dark} />, dark => <IconBtn dark={dark} chevron />]} />
            </Row>
            <Row h="h-[140px]" eye title="chevron only" note={['You can have only chevron in an icon button, to use it as a more icon']}>
                <Table labels={['off', 'on']} cells={[dark => <IconBtn dark={dark} />, dark => <IconBtn dark={dark} />]} />
            </Row>
            <Row h="h-[140px]" eye title="focus ring">
                <Table labels={['off', 'on']} cells={[dark => <IconBtn dark={dark} />, dark => <Ring dark={dark}><IconBtn dark={dark} /></Ring>]} />
            </Row>
        </Card>
    );
}

function LinkLabel({ dark, tone = 'rest', end }: { dark?: boolean; tone?: 'rest' | 'hover' | 'pressed' | 'off'; end?: boolean }) {
    const ink = {
        rest: dark ? 'text-[#3f6b58]' : 'text-[#5f8f7c]',
        hover: dark ? 'text-[#4f7d6b] underline' : 'text-[#5f8f7c] underline',
        pressed: dark ? 'text-[#2f5444]' : 'text-[#4f7d6b]',
        off: dark ? 'text-[#262e2a]' : 'text-[#dfe2dc]',
    }[tone];
    return (
        <span className={`flex items-center gap-[1px] text-[4.7px] ${ink}`}>
            Button
            {end && <span className="h-[6px] w-[6px] rounded-[1px] border-[0.5px] border-current" />}
        </span>
    );
}

function ButtonLinkCard() {
    return (
        <Card title="Button Link" width="w-[544px]">
            <Row h="h-[97.5px]" title="Overview" list={['button', 'text', 'icon end', 'focus ring']}>
                <CrossOverview x={183} y={46} w={25} h={11} pins={[[166, 51.5], [181, 30], [198, 30], [227, 51.5]]}>
                    <Ring><LinkLabel end /></Ring>
                </CrossOverview>
            </Row>
            <Row h="h-[98px]" title="Anatomy: default">
                <GridAnatomy x={183} y={40} w={35} h={11} n={24} />
            </Row>
            <Row h="h-[98px]" title="Anatomy: large">
                <GridAnatomy x={183} y={40} w={35} h={13} large pillX n={32} />
            </Row>
            <Row h="h-[127px]" title="Size">
                <Table
                    tall={false}
                    labels={['default', 'large']}
                    cells={[
                        dark => <><LinkLabel dark={dark} /><Measure n={24} dark={dark} /></>,
                        dark => <><LinkLabel dark={dark} /><Measure n={32} dark={dark} /></>,
                    ]}
                />
            </Row>
            <Row h="h-[140px]" title="State: default">
                <Table
                    labels={['rest', 'hover', 'pressed', 'disabled']}
                    cells={[
                        dark => <LinkLabel dark={dark} />,
                        dark => <LinkLabel dark={dark} tone="hover" />,
                        dark => <LinkLabel dark={dark} tone="pressed" />,
                        dark => <LinkLabel dark={dark} tone="off" />,
                    ]}
                />
            </Row>
            <Row h="h-[140px]" eye title="Icon end" note={['icon-default']}>
                <Table labels={['off', 'on']} cells={[dark => <LinkLabel dark={dark} />, dark => <LinkLabel dark={dark} end />]} />
            </Row>
            <Row h="h-[140px]" eye title="focus ring">
                <Table
                    labels={['off', 'on']}
                    cells={[
                        dark => <LinkLabel dark={dark} />,
                        dark => (
                            <>
                                <span className={`flex h-[15px] w-[19px] items-center justify-center rounded-[5px] border-[0.8px] ${dark ? 'border-[#4f8f78]' : 'border-[#7fa896]'}`}><LinkLabel dark={dark} /></span>
                                <RadiusPill text="radius-lg" dark={dark} />
                            </>
                        ),
                    ]}
                />
            </Row>
        </Card>
    );
}

const FIELD_NOTE_DEFAULT = ['There is a 2px (spacer-0.5) left and right margin in "text" div, that help to maintain visual balance', 'When icon is present, a gap of additional 2px (spacer-0.5) added'];
const FIELD_NOTE_LARGE = ['There is a 4px (spacer-1) left and right margin in "text" div, that help to maintain visual balance', 'No gap when icon is present'];

function TextInputCard() {
    return (
        <Card title="Text Input" width="w-[656px]">
            <Row h="h-[97.5px]" title="Overview" list={['text input', 'title', 'focus ring', 'icon start', 'text/placeholder', 'help', 'help text']}>
                <FieldOverview />
            </Row>
            <Row h="h-[98px]" title="General Anatomy"><GeneralAnatomy /></Row>
            <Row h="h-[98px]" title="Anatomy: default" note={FIELD_NOTE_DEFAULT}>
                <FieldAnatomy kind="icons" y0={31} tokens={[SP05, SP1, SP15]} n={24} />
                <FieldAnatomy kind="plain" y0={31} label="no icons = no gap" tokens={[SP05, SP1, SP15]} n={24} />
                <FieldAnatomy kind="margins" y0={31} label="margins" tokens={[SP05]} n={24} />
            </Row>
            <Row h="h-[98px]" title="Anatomy: large" note={FIELD_NOTE_LARGE}>
                <FieldAnatomy kind="icons" large y0={50} tokens={[SP1, SP2]} n={32} />
                <FieldAnatomy kind="plain" large y0={50} label="no icons" tokens={[SP1, SP2]} n={32} />
                <FieldAnatomy kind="margins" large y0={50} tokens={[]} n={32} />
            </Row>
            <Row h="h-[127px]" title="Size">
                <Table
                    tall={false}
                    labels={['default', 'large']}
                    cells={[
                        dark => <><Field dark={dark} /><Measure n={24} dark={dark} /></>,
                        dark => <><Field dark={dark} large /><Measure n={32} dark={dark} /></>,
                    ]}
                />
            </Row>
            <Row h="h-[140px]" title="State">
                <Table
                    labels={['rest', 'hover', 'focus', 'error', 'disabled']}
                    cells={[
                        dark => <Field w="w-[66px]" dark={dark} shift />,
                        dark => <Field w="w-[66px]" dark={dark} shift />,
                        dark => <Field w="w-[66px]" dark={dark} caret />,
                        dark => <Field w="w-[66px]" dark={dark} caret tone={dark ? 'border-[0.7px] border-[#6b3a42]' : 'border-[0.7px] border-[#eb8a9c]'} helpText="Help text" />,
                        dark => <Field w="w-[66px]" dark={dark} ph="" tone={dark ? 'bg-[#1e201d]' : 'bg-[#efeeea]'} />,
                    ]}
                />
            </Row>
            <Row h="h-[140px]" title="Value">
                <Table
                    labels={['placeholder', 'text', 'empty']}
                    cells={[
                        dark => <Field w="w-[66px]" dark={dark} />,
                        dark => <Field w="w-[66px]" dark={dark} value="Text" />,
                        dark => <Field w="w-[66px]" dark={dark} ph="" />,
                    ]}
                />
            </Row>
            <Row h="h-[140px]" eye title="Title" note={['Title is turned on by default']}>
                <Table labels={['on', 'off']} cells={[dark => <Field dark={dark} />, dark => <Field dark={dark} title={false} />]} />
            </Row>
            <Row h="h-[140px]" eye title="Icon Start">
                <Table labels={['off', 'on']} cells={[dark => <Field dark={dark} />, dark => <Field dark={dark} start />]} />
            </Row>
            <Row h="h-[140px]" eye title="?" note={['Use ? if you need a big explanation in a tooltip']}>
                <Table labels={['off', 'on']} cells={[dark => <Field dark={dark} />, dark => <Field dark={dark} help />]} />
            </Row>
            <Row h="h-[140px]" eye title="Help Text" note={['Use help text if you need a brief explanation', 'Also used in error state']}>
                <Table labels={['off', 'on']} cells={[dark => <Field dark={dark} />, dark => <Field dark={dark} helpText="Brief explanation" />]} />
            </Row>
            <Row h="h-[140px]" eye title="Focus Ring" note={['Used for keyboard navigation']}>
                <Table labels={['off', 'on']} cells={[dark => <Field dark={dark} />, dark => <Field dark={dark} tone="border-[0.8px] border-[#6f9a88]" />]} />
            </Row>
        </Card>
    );
}

function SelectCard() {
    const picked = 'Selected item';
    return (
        <Card title="Select" width="w-[656px]">
            <Row h="h-[97.5px]" title="Overview" list={['select', 'title', 'icon start', 'text/placeholder', 'help', 'chevron', 'focus ring', 'help text']}>
                <FieldOverview select />
            </Row>
            <Row h="h-[98px]" title="General Anatomy"><GeneralAnatomy /></Row>
            <Row h="h-[98px]" title="Anatomy: default" note={FIELD_NOTE_DEFAULT}>
                <FieldAnatomy kind="icons" y0={43} tokens={[SP05, SP1, SP15]} n={24} />
                <FieldAnatomy kind="plain" y0={43} label="no icon = no gap" tokens={[SP05, SP1, SP15]} n={24} />
                <FieldAnatomy kind="margins" y0={43} label="margins" tokens={[SP05]} n={24} />
            </Row>
            <Row h="h-[98px]" title="Anatomy: large" note={FIELD_NOTE_LARGE}>
                <FieldAnatomy kind="icons" large y0={42} label="no gaps, only margins" tokens={[SP2]} n={32} />
                <FieldAnatomy kind="plain" large y0={42} label="no icons" tokens={[SP2]} n={32} />
                <FieldAnatomy kind="margins" large y0={42} label="margins" tokens={[SP1, SP2]} n={32} />
            </Row>
            <Row h="h-[127px]" title="Size">
                <Table
                    tall={false}
                    labels={['default', 'large']}
                    cells={[
                        dark => <><Sel dark={dark} /><Measure n={24} dark={dark} /></>,
                        dark => <><Sel dark={dark} large /><Measure n={32} dark={dark} /></>,
                    ]}
                />
            </Row>
            <Row h="h-[140px]" title="State">
                <Table labels={['rest', 'hover', 'disabled']} cells={[dark => <Sel dark={dark} />, dark => <Sel dark={dark} />, dark => <Sel dark={dark} faint />]} />
            </Row>
            <Row h="h-[140px]" title="Value">
                <Table labels={['placeholder', 'value']} cells={[dark => <Sel dark={dark} />, dark => <Sel dark={dark} text={picked} />]} />
            </Row>
            <Row h="h-[140px]" eye title="Icon Start">
                <Table labels={['off', 'on']} cells={[dark => <Sel dark={dark} text={picked} />, dark => <Sel dark={dark} text={picked} start />]} />
            </Row>
            <Row h="h-[140px]" eye title="?" note={['Use ? if you need a big explanation in a tooltip']}>
                <Table labels={['off', 'on']} cells={[dark => <Sel dark={dark} text={picked} />, dark => <Sel dark={dark} text={picked} help />]} />
            </Row>
            <Row h="h-[140px]" eye title="Help Text" note={['Use help text if you need a brief explanation', 'Also used in error state']}>
                <Table labels={['off', 'on']} cells={[dark => <Sel dark={dark} text={picked} />, dark => <Sel dark={dark} text={picked} helpText="Brief explanation" />]} />
            </Row>
            <Row h="h-[140px]" eye title="Focus Ring" note={['Used for keyboard navigation']}>
                <Table labels={['off', 'on']} cells={[dark => <Sel dark={dark} text={picked} />, dark => <Ring dark={dark}><Sel dark={dark} text={picked} /></Ring>]} />
            </Row>
        </Card>
    );
}

function CheckboxCard() {
    return (
        <Card title="Checkbox" width="w-[544px]">
            <Row h="h-[97.5px]" title="Overview" list={['checkbox', 'text', 'focus ring']}>
                <CrossOverview x={190} y={50} w={22} h={12} pins={[[177, 56], [228, 56], [196, 35]]}>
                    <CheckRow ring />
                </CrossOverview>
            </Row>
            <Row h="h-[98px]" title="Anatomy">
                <Panel>
                    <Bar x={189} y={41} w={22} h={11} c="blueband" />
                    <Bar x={180} y={42} w={31} h={1} c="greenline" />
                    <Bar x={180} y={51} w={31} h={1} c="greenline" />
                    <Bar x={198} y={31} w={2} h={21} c="blueband" />
                    <Chip x={180} y={42} n="" c="green" />
                    <Chip x={180} y={51} n="" c="green" />
                    <Chip x={199} y={31} n="" c="blue" />
                    <Size x={215} y={46} h={10} n={24} />
                    <StylePill x={184} y={59} text="sj/default" />
                    <StylePill x={180} y={70} text="radius-default" />
                    <Tokens items={[SP1, SP15]} />
                </Panel>
            </Row>
            <Row h="h-[127px]" title="Type">
                <Table
                    tall={false}
                    labels={['Checked', 'Partly-checked', 'Unchecked']}
                    cells={[dark => <CheckRow dark={dark} />, dark => <CheckRow dark={dark} kind="part" />, dark => <CheckRow dark={dark} kind="off" />]}
                />
            </Row>
            <Row h="h-[140px]" eye title="Text">
                <Table labels={['on', 'off']} cells={[dark => <CheckRow dark={dark} />, dark => <CheckRow dark={dark} text={false} />]} />
            </Row>
            <Row h="h-[140px]" eye title="Focus ring">
                <Table
                    labels={['off', 'on']}
                    cells={[
                        dark => <CheckRow dark={dark} />,
                        dark => (
                            <>
                                <CheckRow dark={dark} ring />
                                <RadiusPill text="radius-lg" dark={dark} />
                            </>
                        ),
                    ]}
                />
            </Row>
        </Card>
    );
}

/* ---------- canvas ---------- */

function Sheet({ x, children }: { x: number; children: ReactNode }) {
    return (
        <div className="absolute top-[581px]" style={{ left: x }}>
            {children}
        </div>
    );
}

function Grain() {
    return (
        <svg className="absolute inset-0 opacity-[0.05]" width="3840" height="2224">
            <filter id="grain">
                <feTurbulence type="fractalNoise" baseFrequency="0.35" numOctaves="2" />
                <feColorMatrix type="saturate" values="0" />
            </filter>
            <rect width="3840" height="2224" filter="url(#grain)" />
        </svg>
    );
}

export default function App() {
    return (
        <div className={`relative h-[2224px] w-[3840px] overflow-hidden bg-[linear-gradient(180deg,#dcdcdc_0px,#dcdcdc_130px,#e3e0c4_300px,#efe195_500px,#fae26f_700px,#fbe26c_1150px,#f0e5a8_1640px,#dedcc8_2224px)] ${SANS}`}>
            <Grain />

            {/* loose bits top left */}
            <Dots x={19} y={297} />
            <Dots x={80} y={296} />
            <Dots x={141} y={296} />
            <span className="absolute left-[18px] top-[321px] flex h-[7px] w-[9px] items-center justify-center rounded-[1px] bg-[#ff4a1c] text-[4px] text-white">24</span>
            <span className="absolute left-[81.5px] top-[318px] h-[11px] w-[1px] bg-[#f4a58a]" />
            <span className="absolute left-[138px] top-[323.5px] h-[1px] w-[11px] bg-[#f4a58a]" />

            {/* Button */}
            <Magenta x={19} y={368}>Button</Magenta>
            <CheckEmoji x={121} y={367} />
            <Purple x={19} y={394} text="Button" />
            <Dashed x={18} y={441} w={408} h={103}>
                <div className="flex pl-[8px] pt-[9px]">
                    <div className="w-[222px]"><ButtonSet /></div>
                    <ButtonSet large />
                </div>
            </Dashed>
            <FrameName x={18} text="Button" />
            <CodeBadge x={390} y={389} />
            <CodeBadge x={526} y={530} />
            <Sheet x={18}><ButtonCard /></Sheet>

            {/* Button Icon */}
            <Magenta x={626} y={375}>Button-Icon</Magenta>
            <CheckEmoji x={802} y={374} />
            <Purple x={626} y={394} text="Butt..." />
            <Dashed x={625} y={440} w={187} h={104}>
                <div className="flex pl-[10px] pt-[9px]">
                    <div className="w-[98px]"><IconSet /></div>
                    <IconSet large />
                </div>
            </Dashed>
            <FrameName x={625} text="Button Icon" />
            <CodeBadge x={776} y={389} />
            <CodeBadge x={1133} y={530} />
            <Sheet x={625}><ButtonIconCard /></Sheet>

            {/* Button Link */}
            <Magenta x={1233} y={375}>Button-Link</Magenta>
            <CheckEmoji x={1409} y={374} />
            <Dots x={1233} y={416} />
            <Dashed x={1233} y={440} w={94} h={77}><LinkSet /></Dashed>
            <FrameName x={1233} text="Button Link" />
            <CodeBadge x={1289} y={389} />
            <CodeBadge x={1739} y={530} />
            <Sheet x={1233}><ButtonLinkCard /></Sheet>

            {/* Text Input */}
            <Magenta x={1841} y={62}>Text Input</Magenta>
            <CheckEmoji x={1988} y={62} />
            <Purple x={1841} y={111} text="Text Input" />
            <Dashed x={1841} y={157} w={600} h={365}>
                <div className="flex flex-col gap-[48px] pl-[10px] pt-[20px]">
                    <InputSet />
                    <InputSet large />
                </div>
            </Dashed>
            <FrameName x={1841} text="Text Input" />
            <CodeBadge x={2404} y={106} />
            <CodeBadge x={2460} y={530} />
            <Sheet x={1840}><TextInputCard /></Sheet>

            {/* Select */}
            <Magenta x={2561} y={300}>Select</Magenta>
            <CheckEmoji x={2658} y={300} />
            <Purple x={2561} y={336} text="Select" />
            <Dashed x={2560} y={382} w={353} h={148}>
                <div className="flex flex-col gap-[42px] pl-[10px] pt-[10px]">
                    <SelectSet />
                    <SelectSet large />
                </div>
            </Dashed>
            <FrameName x={2561} text="Select" />
            <CodeBadge x={2877} y={330} />
            <CodeBadge x={3180} y={530} />
            <Sheet x={2560}><SelectCard /></Sheet>

            {/* Checkbox */}
            <Magenta x={3278} y={447}>Checkbox</Magenta>
            <CheckEmoji x={3426} y={447} />
            <Dots x={3278} y={484} />
            <Dashed x={3277} y={506} w={111} h={23}>
                <div className="flex h-full items-center gap-[15px] pl-[6px]">
                    <CheckRow />
                    <CheckRow kind="off" />
                    <CheckRow kind="part" />
                </div>
            </Dashed>
            <FrameName x={3279} text="Checkbox" />
            <CodeBadge x={3351} y={455} />
            <CodeBadge x={3787} y={530} />
            <Sheet x={3279}><CheckboxCard /></Sheet>
        </div>
    );
}
